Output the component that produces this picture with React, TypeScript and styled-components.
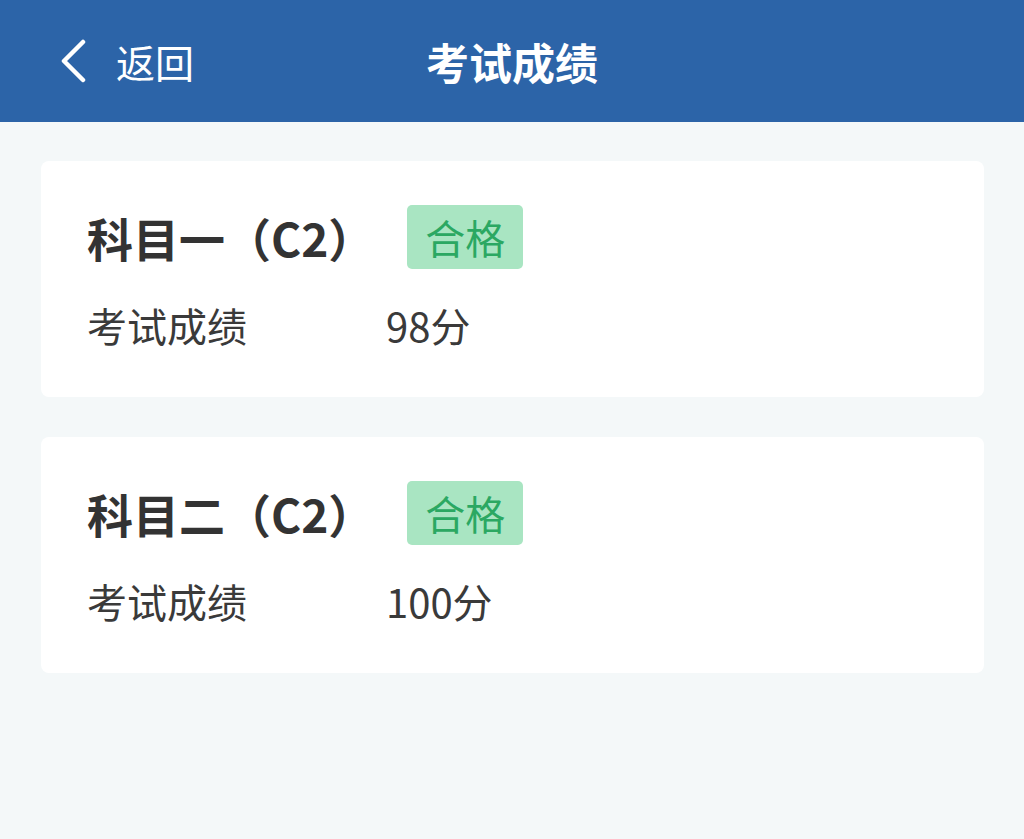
import styled, { createGlobalStyle } from 'styled-components';

const GlobalStyle = createGlobalStyle`
  html, body {
    margin: 0;
    padding: 0;
    background: #f4f8f9;
    font-family: "Noto Sans CJK SC", "Noto Sans", sans-serif;
  }
`;

const Page = styled.div`
  min-height: 839px;
  background: #f4f8f9;
`;

const Header = styled.header`
  height: 122px;
  background: #2c64a8;
  display: grid;
  grid-template-columns: 1fr auto 1fr;
  align-items: center;
  padding: 0 0 0 58px;
  color: #ffffff;
`;

const BackButton = styled.div`
  display: flex;
  align-items: center;
  gap: 28px;
  font-size: 39px;
  line-height: 1;
`;

const Title = styled.h1`
  margin: 0;
  font-size: 43px;
  font-weight: 700;
  line-height: 1;
  margin-left: -58px;
`;

const List = styled.main`
  padding: 39px 40px 0 41px;
  display: flex;
  flex-direction: column;
  gap: 40px;
`;

const Card = styled.section`
  background: #ffffff;
  border-radius: 8px;
  padding: 44px 46px 48px;
  display: flex;
  flex-direction: column;
  gap: 32px;
`;

const CardHead = styled.div`
  display: flex;
  align-items: center;
  height: 64px;
`;

const Subject = styled.h2`
  margin: 0;
  font-size: 46px;
  font-weight: 700;
  color: #333333;
  line-height: 1;
`;

const Badge = styled.span`
  margin-left: 33px;
  height: 64px;
  padding: 0 18px;
  display: flex;
  align-items: center;
  background: #a9e5c2;
  color: #2ba862;
  border-radius: 5px;
  font-size: 40px;
`;

const Row = styled.div`
  display: flex;
  align-items: center;
  height: 48px;
  font-size: 40px;
  color: #3a3a3a;
`;

const Label = styled.span`
  width: 299px;
`;

const results = [
  { subject: '科目一（C2）', status: '合格', score: '98分' },
  { subject: '科目二（C2）', status: '合格', score: '100分' },
];

export default function App() {
  return (
    <Page>
      <GlobalStyle />
      <Header>
        <BackButton>
          <svg width="30" height="44" viewBox="0 0 30 44" fill="none">
            <path d="M25 3 L6 22 L25 41" stroke="#ffffff" strokeWidth="4.5" strokeLinecap="round" strokeLinejoin="round" />
          </svg>
          返回
        </BackButton>
        <Title>考试成绩</Title>
        <div />
      </Header>
      <List>
        {results.map((r) => (
          <Card key={r.subject}>
            <CardHead>
              <Subject>{r.subject}</Subject>
              <Badge>{r.status}</Badge>
            </CardHead>
            <Row>
              <Label>考试成绩</Label>
              <span>{r.score}</span>
            </Row>
          </Card>
        ))}
      </List>
    </Page>
  );
}
